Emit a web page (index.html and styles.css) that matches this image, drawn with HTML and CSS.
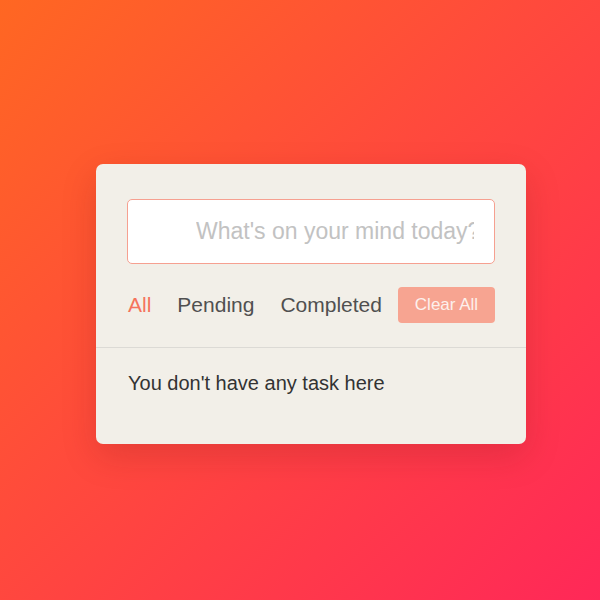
FILE: index.html
```html
<!DOCTYPE html>
<html>
<head>
<meta charset="utf-8">
<link rel="stylesheet" href="styles.css">
</head>
<body>
<div class="page">
  <div class="card">
    <div class="top">
      <input class="task-input" type="text" placeholder="What's on your mind today?">
      <div class="controls">
        <div class="filters">
          <span class="filter active">All</span>
          <span class="filter">Pending</span>
          <span class="filter">Completed</span>
        </div>
        <button class="clear">Clear All</button>
      </div>
    </div>
    <div class="tasks">
      <p class="empty">You don't have any task here</p>
    </div>
  </div>
</div>
</body>
</html>
```
FILE: styles.css
```css
* { box-sizing: border-box; }
html, body { margin: 0; height: 100%; }
body {
  font-family: "Liberation Sans", Arial, sans-serif;
  background: linear-gradient(135deg, #ff6722 0%, #ff4a3c 45%, #ff2858 100%);
}
.page {
  min-height: 100vh;
  padding: 164px 0 0 96px;
}
.card {
  width: 430px;
  height: 280px;
  background: #f2efe8;
  border-radius: 7px;
  box-shadow: 0 12px 35px rgba(120, 20, 20, 0.2);
}
.top {
  padding: 35px 31px 0;
}
.task-input {
  display: block;
  width: 100%;
  height: 65px;
  border: 1px solid #f6a090;
  border-radius: 5px;
  background: #fff;
  padding: 0 20px 0 68px;
  font-family: "Liberation Sans", Arial, sans-serif;
  font-size: 23px;
  color: #333;
  outline: none;
}
.task-input::placeholder { color: #c2c2c2; }
.controls {
  display: flex;
  align-items: center;
  justify-content: space-between;
  margin-top: 23px;
  padding-bottom: 24px;
  border-bottom: 1px solid #dcdad5;
  margin-left: -31px;
  margin-right: -31px;
  padding-left: 32px;
  padding-right: 31px;
}
.filters { display: flex; gap: 26px; }
.filter {
  font-size: 21px;
  color: #505050;
}
.filter.active { color: #f5735c; }
.clear {
  width: 97px;
  height: 36px;
  border: none;
  border-radius: 4px;
  background: #f7a491;
  color: #fdf0ec;
  font-family: "Liberation Sans", Arial, sans-serif;
  font-size: 17px;
  padding: 0;
}
.tasks { padding: 24px 32px; }
.empty {
  margin: 0;
  font-size: 20px;
  color: #333;
}
```
